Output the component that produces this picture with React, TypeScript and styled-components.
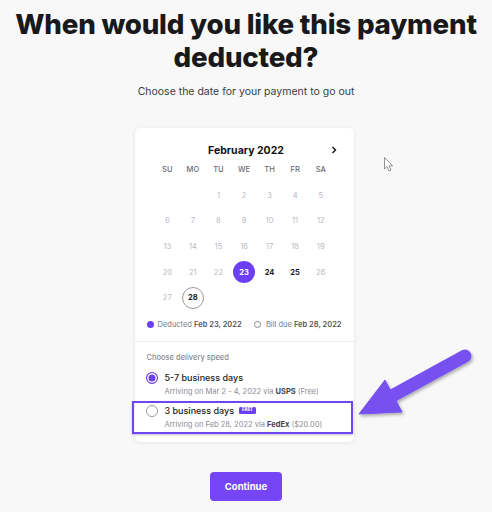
import styled, { createGlobalStyle, css } from 'styled-components';

const GlobalStyle = createGlobalStyle`
  html, body {
    margin: 0;
    padding: 0;
    background: #f8f8f9;
    font-family: Inter, "Noto Sans", sans-serif;
    color: #1c1c1e;
  }
`;

const PURPLE = '#6d3ff2';

const Page = styled.div`
  position: relative;
  width: 492px;
  height: 512px;
  overflow: hidden;
  display: flex;
  flex-direction: column;
  align-items: center;
`;

const Title = styled.h1`
  margin: 8px 0 0;
  font-size: 27.7px;
  line-height: 33px;
  font-weight: 800;
  text-align: center;
  letter-spacing: -0.2px;
  color: #19191b;
`;

const Subtitle = styled.p`
  margin: 11px 0 0;
  font-size: 10.5px;
  line-height: 14px;
  color: #3c3c44;
`;

const Card = styled.div`
  margin: 29px 4px 0 0;
  width: 219px;
  background: #fff;
  border-radius: 5px;
  box-shadow: 0 1px 4px rgba(0, 0, 0, 0.08);
`;

const Calendar = styled.div`
  padding: 14px 20px 0;
`;

const Header = styled.div`
  display: grid;
  grid-template-columns: 1fr auto 1fr;
  align-items: center;
  height: 16px;
  margin-right: -4px;
`;

const Month = styled.div`
  grid-column: 2;
  font-size: 10.5px;
  font-weight: 700;
  color: #111;
`;

const Chevron = styled.svg`
  justify-self: end;
`;

const Grid = styled.div`
  display: grid;
  grid-template-columns: repeat(7, 1fr);
  grid-auto-rows: 25.6px;
  margin-top: -1px;
`;

const Weekday = styled.div`
  display: flex;
  align-items: center;
  justify-content: center;
  font-size: 7.5px;
  font-weight: 500;
  color: #6b6b73;
`;

type DayKind = 'muted' | 'dark' | 'selected' | 'due';

const Day = styled.div<{ $kind: DayKind }>`
  display: flex;
  align-items: center;
  justify-content: center;
  font-size: 7.5px;
  color: #b9b9bf;

  span {
    width: 22px;
    height: 22px;
    display: flex;
    align-items: center;
    justify-content: center;
    border-radius: 50%;
    box-sizing: border-box;
  }

  ${(p) =>
    p.$kind === 'dark' &&
    css`
      color: #1a1a1a;
      font-weight: 700;
    `}
  ${(p) =>
    p.$kind === 'selected' &&
    css`
      color: #fff;
      font-weight: 700;
      span {
        background: ${PURPLE};
      }
    `}
  ${(p) =>
    p.$kind === 'due' &&
    css`
      color: #1a1a1a;
      font-weight: 700;
      span {
        border: 1px solid #9a9aa0;
      }
    `}
`;

const Legend = styled.div`
  display: flex;
  justify-content: space-between;
  align-items: center;
  margin-top: 9px;
  padding: 0 12px;
  height: 10px;
  font-size: 7.5px;
  color: #7a7a82;
`;

const LegendItem = styled.div<{ $gap: number }>`
  display: flex;
  align-items: center;
  gap: ${(p) => p.$gap}px;

  b {
    color: #55555c;
    font-weight: 600;
  }
`;

const Dot = styled.i<{ $filled?: boolean }>`
  display: block;
  width: 7px;
  height: 7px;
  border-radius: 50%;
  box-sizing: border-box;
  ${(p) =>
    p.$filled
      ? css`background: ${PURPLE};`
      : css`border: 1px solid #8a8a90; background: #fff;`}
`;

const Divider = styled.hr`
  margin: 11px 0 0;
  border: 0;
  border-top: 1px solid #ececee;
`;

const Delivery = styled.div`
  padding: 11px 0 8px;
  display: flex;
  flex-direction: column;
  gap: 0;
`;

const SectionLabel = styled.div`
  padding-left: 12px;
  margin-bottom: 5px;
  font-size: 7.5px;
  line-height: 10px;
  color: #8a8a92;
  font-weight: 500;
`;

const Option = styled.div<{ $highlight?: boolean }>`
  position: relative;
  display: grid;
  grid-template-columns: 30px 1fr;
  grid-template-rows: 14px 12px;
  row-gap: 1px;
  height: 33px;
  box-sizing: border-box;
  padding-top: 3px;
  ${(p) =>
    p.$highlight &&
    css`
      &::after {
        content: '';
        position: absolute;
        left: -3px;
        right: 1px;
        top: 0;
        bottom: 0;
        border: 2px solid #7046f0;
        box-shadow: 0 1px 2px rgba(60, 30, 160, 0.3);
      }
    `}
`;

const Radio = styled.div<{ $checked?: boolean }>`
  align-self: center;
  justify-self: center;
  margin-left: 4px;
  width: 12px;
  height: 12px;
  border-radius: 50%;
  box-sizing: border-box;
  ${(p) =>
    p.$checked
      ? css`
          border: 1.5px solid ${PURPLE};
          background: ${PURPLE};
          box-shadow: inset 0 0 0 1.5px #fff;
        `
      : css`
          border: 1px solid #9a9aa0;
        `}
`;

const OptionTitle = styled.div`
  display: flex;
  align-items: center;
  gap: 5px;
  font-size: 9px;
  font-weight: 500;
  line-height: 14px;
  color: #1c1c20;
`;

const Badge = styled.span`
  display: inline-flex;
  align-items: center;
  justify-content: center;
  width: 17px;
  height: 7px;
  background: ${PURPLE};
  color: #fff;
  font-size: 4.2px;
  font-weight: 800;
  line-height: 1;
  border-radius: 1.5px;
`;

const OptionSub = styled.div`
  grid-column: 2;
  font-size: 7.5px;
  color: #8d8d94;
  line-height: 12px;

  b {
    color: #45454c;
    font-weight: 700;
  }
`;

const Button = styled.button`
  margin-top: 30px;
  width: 72px;
  height: 29px;
  flex-shrink: 0;
  border: 0;
  border-radius: 4px;
  background: #7646f6;
  color: #fff;
  font-family: inherit;
  font-size: 9.5px;
  font-weight: 700;
`;

const Overlay = styled.svg`
  position: absolute;
  left: 0;
  top: 0;
  pointer-events: none;
`;

const weekdays = ['SU', 'MO', 'TU', 'WE', 'TH', 'FR', 'SA'];

const dayKind = (d: number): DayKind => {
  if (d === 23) return 'selected';
  if (d === 28) return 'due';
  if (d === 24 || d === 25) return 'dark';
  return 'muted';
};

export default function App() {
  const cells: (number | null)[] = [null, null];
  for (let d = 1; d <= 28; d++) cells.push(d);

  return (
    <Page>
      <GlobalStyle />
      <Title>
        When would you like this payment
        <br />
        deducted?
      </Title>
      <Subtitle>Choose the date for your payment to go out</Subtitle>

      <Card>
        <Calendar>
          <Header>
            <Month>February 2022</Month>
            <Chevron width="8" height="8" viewBox="0 0 8 8">
              <path d="M2.5 1 L5.5 4 L2.5 7" fill="none" stroke="#111" strokeWidth="1.4" />
            </Chevron>
          </Header>
          <Grid>
            {weekdays.map((w) => (
              <Weekday key={w}>{w}</Weekday>
            ))}
            {cells.map((d, i) =>
              d === null ? (
                <Day key={`e${i}`} $kind="muted" />
              ) : (
                <Day key={d} $kind={dayKind(d)}>
                  <span>{d}</span>
                </Day>
              )
            )}
          </Grid>
        </Calendar>

        <Legend>
          <LegendItem $gap={4}>
            <Dot $filled />
            <span>
              Deducted <b>Feb 23, 2022</b>
            </span>
          </LegendItem>
          <LegendItem $gap={5}>
            <Dot />
            <span>
              Bill due <b>Feb 28, 2022</b>
            </span>
          </LegendItem>
        </Legend>

        <Divider />

        <Delivery>
          <SectionLabel>Choose delivery speed</SectionLabel>
          <Option>
            <Radio $checked />
            <OptionTitle>5-7 business days</OptionTitle>
            <OptionSub>
              Arriving on Mar 2 - 4, 2022 via <b>USPS</b> (Free)
            </OptionSub>
          </Option>
          <Option $highlight>
            <Radio />
            <OptionTitle>
              3 business days <Badge>FAST</Badge>
            </OptionTitle>
            <OptionSub>
              Arriving on Feb 28, 2022 via <b>FedEx</b> ($20.00)
            </OptionSub>
          </Option>
        </Delivery>
      </Card>

      <Button>Continue</Button>

      <Overlay width="492" height="512" viewBox="0 0 492 512">
        <defs>
          <filter id="sh" x="-20%" y="-20%" width="140%" height="140%">
            <feDropShadow dx="1.5" dy="2" stdDeviation="1.5" floodColor="#000" floodOpacity="0.3" />
          </filter>
        </defs>
        <g filter="url(#sh)" fill="#7651f0" stroke="#7651f0">
          <line x1="465" y1="356" x2="392" y2="396" strokeWidth="13" strokeLinecap="round" />
          <polygon points="359,414 385,380 402,412" strokeWidth="1" strokeLinejoin="round" />
        </g>
        <path
          d="M384.5 157.5 L384.5 169 L387 166.5 L389 171 L391 170 L389 165.8 L392.5 165.8 Z"
          fill="#fff"
          stroke="#777"
          strokeWidth="0.8"
        />
      </Overlay>
    </Page>
  );
}
